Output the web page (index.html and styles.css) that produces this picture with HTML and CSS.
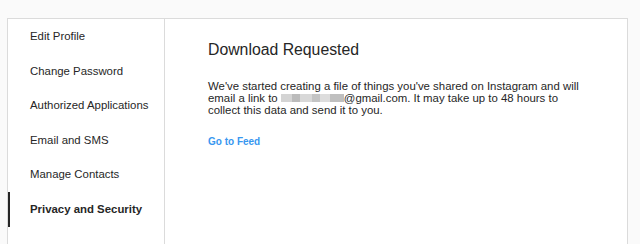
FILE: index.html
```html
<!DOCTYPE html>
<html lang="en">
<head>
    <meta charset="UTF-8">
    <title>Download Requested</title>
    <link rel="stylesheet" href="styles.css">
</head>
<body>
    <div class="card">
        <ul class="side-nav">
            <li>Edit Profile</li>
            <li>Change Password</li>
            <li>Authorized Applications</li>
            <li>Email and SMS</li>
            <li>Manage Contacts</li>
            <li class="active">Privacy and Security</li>
        </ul>
        <div class="content">
            <h2>Download Requested</h2>
            <p>We've started creating a file of things you've shared on Instagram and will email a link to <span class="blurred"></span>@gmail.com. It may take up to 48 hours to collect this data and send it to you.</p>
            <a class="feed-link" href="#">Go to Feed</a>
        </div>
    </div>
</body>
</html>
```

FILE: styles.css
```css
body {
    margin: 0;
    background-color: #fafafa;
    font-family: 'Liberation Sans', Arial, sans-serif;
    color: #262626;
}
.card {
    display: flex;
    margin: 18px 12px 0 7px;
    height: 226px;
    background-color: white;
    border: 1px solid #dbdbdb;
    border-bottom: none;
}
.side-nav {
    list-style: none;
    margin: 0;
    padding: 0;
    width: 156px;
    border-right: 1px solid #dbdbdb;
}
.side-nav li {
    height: 34.6px;
    line-height: 34.6px;
    padding-left: 20px;
    border-left: 2px solid transparent;
    font-size: 11.4px;
}
.side-nav li.active {
    border-left-color: #262626;
    font-weight: bold;
}
.content {
    padding: 21px 0 0 43px;
    flex: 1;
}
.content h2 {
    margin: 0;
    font-size: 15.8px;
    font-weight: normal;
    line-height: 20px;
}
.content p {
    margin: 20px 0 0;
    width: 380px;
    font-size: 11.4px;
    line-height: 12.2px;
}
.blurred {
    display: inline-block;
    width: 63px;
    height: 8px;
    vertical-align: 0;
    background: linear-gradient(90deg, #d4d4d4 0 18%, #bbb 18% 30%, #d8d8d8 30% 50%, #c4c4c4 50% 62%, #ddd 62% 78%, #bfbfbf 78% 100%);
}
.feed-link {
    display: inline-block;
    margin-top: 19px;
    color: #3897f0;
    font-size: 10px;
    font-weight: bold;
    text-decoration: none;
}
```
